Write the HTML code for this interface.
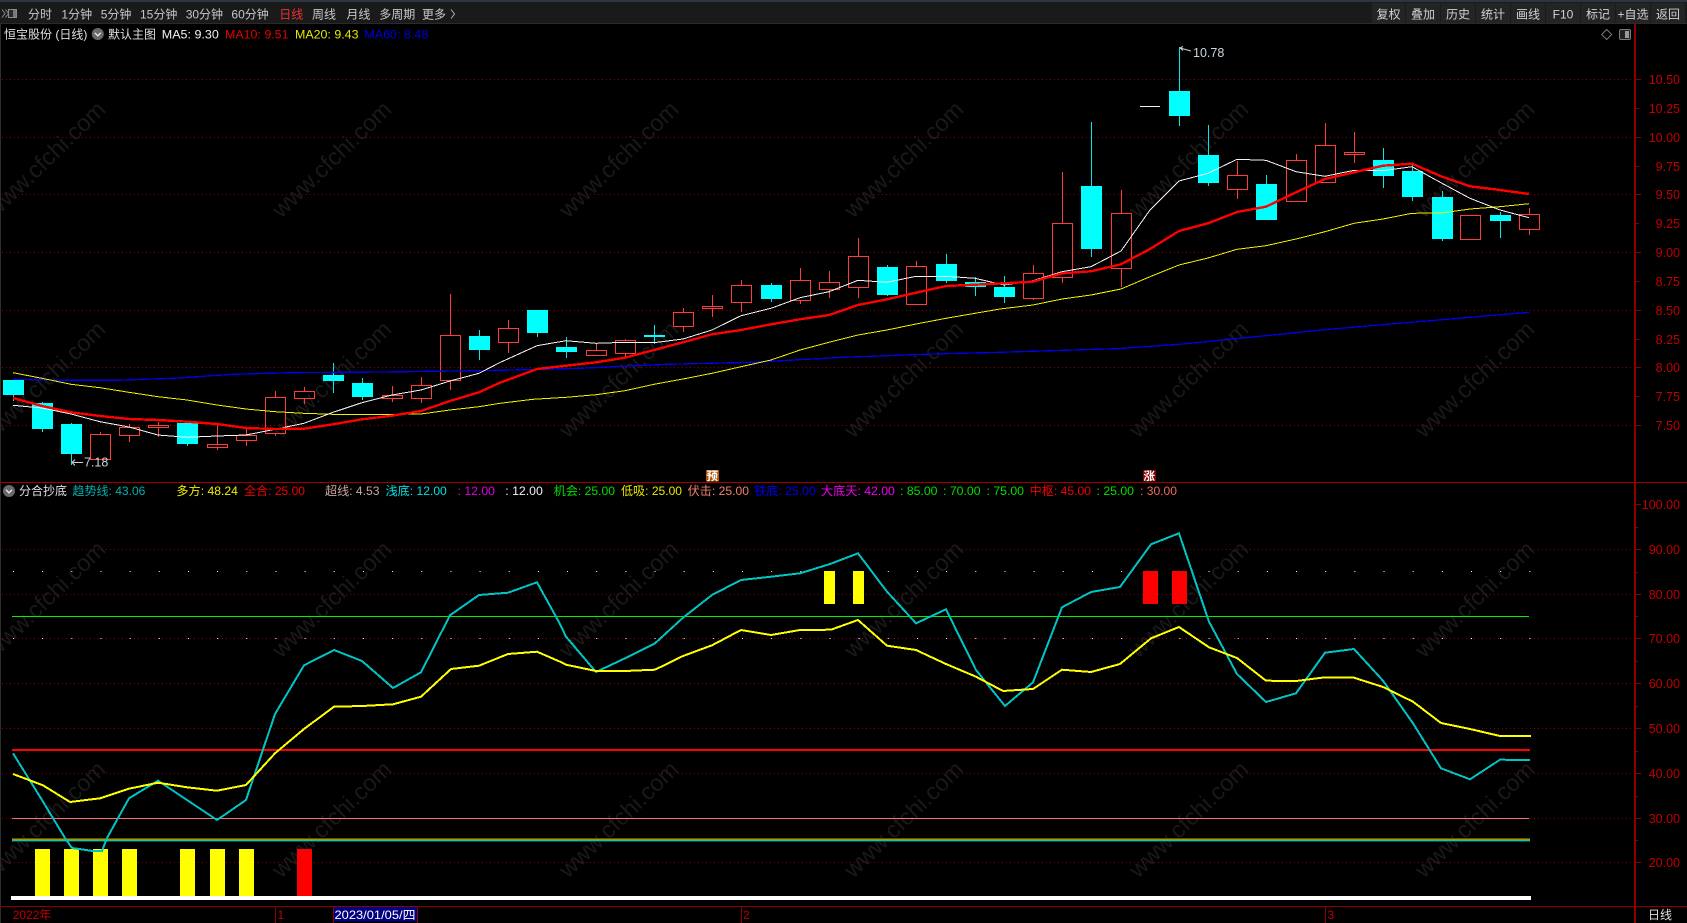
<!DOCTYPE html>
<html lang="zh-CN">
<head>
<meta charset="utf-8">
<title>恒宝股份</title>
<style>
html,body{margin:0;padding:0;background:#000;width:1687px;height:923px;overflow:hidden}
svg{display:block}
text{font-family:"Liberation Sans","Noto Sans CJK SC",sans-serif;font-size:12px}
.wm text{font-size:23.500px;fill:#191919;text-anchor:end}
.tb text{fill:#c8c8c8;font-size:12px}
.tbr text{fill:#d0d0d0;font-size:12px;text-anchor:middle}
.ax text{fill:#c00000;font-size:12.500px;text-anchor:end}
.grid line{stroke:#8a0000;stroke-width:1;stroke-dasharray:1 3}
</style>
</head>
<body>
<svg xmlns="http://www.w3.org/2000/svg" width="1687" height="923" viewBox="0 0 1687 923">
<rect width="1687" height="923" fill="#000"/>

<!-- watermark -->
<g class="wm">
<text transform="translate(107,111) rotate(-44)">www.cfchi.com</text>
<text transform="translate(393,111) rotate(-44)">www.cfchi.com</text>
<text transform="translate(680,111) rotate(-44)">www.cfchi.com</text>
<text transform="translate(965,111) rotate(-44)">www.cfchi.com</text>
<text transform="translate(1250,111) rotate(-44)">www.cfchi.com</text>
<text transform="translate(1536,111) rotate(-44)">www.cfchi.com</text>
<text transform="translate(107,331) rotate(-44)">www.cfchi.com</text>
<text transform="translate(393,331) rotate(-44)">www.cfchi.com</text>
<text transform="translate(680,331) rotate(-44)">www.cfchi.com</text>
<text transform="translate(965,331) rotate(-44)">www.cfchi.com</text>
<text transform="translate(1250,331) rotate(-44)">www.cfchi.com</text>
<text transform="translate(1536,331) rotate(-44)">www.cfchi.com</text>
<text transform="translate(107,551) rotate(-44)">www.cfchi.com</text>
<text transform="translate(393,551) rotate(-44)">www.cfchi.com</text>
<text transform="translate(680,551) rotate(-44)">www.cfchi.com</text>
<text transform="translate(965,551) rotate(-44)">www.cfchi.com</text>
<text transform="translate(1250,551) rotate(-44)">www.cfchi.com</text>
<text transform="translate(1536,551) rotate(-44)">www.cfchi.com</text>
<text transform="translate(107,771) rotate(-44)">www.cfchi.com</text>
<text transform="translate(393,771) rotate(-44)">www.cfchi.com</text>
<text transform="translate(680,771) rotate(-44)">www.cfchi.com</text>
<text transform="translate(965,771) rotate(-44)">www.cfchi.com</text>
<text transform="translate(1250,771) rotate(-44)">www.cfchi.com</text>
<text transform="translate(1536,771) rotate(-44)">www.cfchi.com</text>
</g>

<!-- top bar -->
<rect x="0" y="0" width="1687" height="2" fill="#2c3540"/>
<rect x="0" y="2" width="1687" height="21" fill="#1a1a1a"/>
<rect x="0" y="23" width="1687" height="1" fill="#2a2a2a"/>
<path d="M2 9.500l3 4-3 4M5.500 9.500l3 4-3 4" fill="none" stroke="#8a8a8a" stroke-width="1"/>
<rect x="8.500" y="9.500" width="8" height="8" fill="#2a2a2a" stroke="#8a8a8a" stroke-width="1"/>
<rect x="13" y="10" width="3" height="7" fill="#777"/>
<g class="tb">
<text x="28" y="18.300">分时</text>
<text x="61.400" y="18.300">1分钟</text>
<text x="100.700" y="18.300">5分钟</text>
<text x="140" y="18.300">15分钟</text>
<text x="185.700" y="18.300">30分钟</text>
<text x="231.400" y="18.300">60分钟</text>
<text x="279.300" y="18.300" style="fill:#f03030">日线</text>
<text x="312" y="18.300">周线</text>
<text x="346.400" y="18.300">月线</text>
<text x="379.300" y="18.300">多周期</text>
<text x="422" y="18.300">更多</text>
</g>
<path d="M451 9.500l3.500 4.500-3.500 4.500" fill="none" stroke="#b0b0b0" stroke-width="1"/>

<g fill="#242424">
<rect x="1372" y="3" width="33" height="20"/>
<rect x="1406" y="3" width="34" height="20"/>
<rect x="1441" y="3" width="34" height="20"/>
<rect x="1476" y="3" width="34" height="20"/>
<rect x="1511" y="3" width="34" height="20"/>
<rect x="1546" y="3" width="34" height="20"/>
<rect x="1581" y="3" width="34" height="20"/>
<rect x="1616" y="3" width="34" height="20"/>
<rect x="1651" y="3" width="34" height="20"/>
</g>
<g class="tbr">
<text x="1388.500" y="18.300">复权</text>
<text x="1423" y="18.300">叠加</text>
<text x="1458" y="18.300">历史</text>
<text x="1493" y="18.300">统计</text>
<text x="1528" y="18.300">画线</text>
<text x="1563" y="18.300">F10</text>
<text x="1598" y="18.300">标记</text>
<text x="1633" y="18.300">+自选</text>
<text x="1668" y="18.300">返回</text>
</g>

<!-- left edge -->
<rect x="0" y="24" width="1" height="899" fill="#2e2e2e"/>

<!-- main header -->
<text x="4" y="38.300" fill="#e0e0e0">恒宝股份 (日线)</text>
<circle cx="97.800" cy="34" r="6" fill="#6a6a6a"/>
<path d="M94.800 32.800l3 3 3-3" fill="none" stroke="#eee" stroke-width="1.300"/>
<text x="108" y="38.300" fill="#e0e0e0">默认主图</text>
<text x="161.800" y="38.300" fill="#f0f0f0" textLength="57" lengthAdjust="spacingAndGlyphs">MA5: 9.30</text>
<text x="225" y="38.300" fill="#e00000" textLength="63.500" lengthAdjust="spacingAndGlyphs">MA10: 9.51</text>
<text x="295" y="38.300" fill="#e6e600" textLength="63.500" lengthAdjust="spacingAndGlyphs">MA20: 9.43</text>
<text x="364.300" y="38.300" fill="#0000e0" textLength="64" lengthAdjust="spacingAndGlyphs">MA60: 8.48</text>
<path d="M1606.700 29.500l5 5-5 5-5-5z" fill="none" stroke="#7a7a7a" stroke-width="1"/>
<rect x="1619.500" y="29.500" width="11" height="10" rx="1.500" fill="#222" stroke="#7a7a7a" stroke-width="1"/>
<rect x="1625" y="31" width="4" height="7" fill="#9a9a9a"/>

<!-- grid main -->
<g class="grid">
<line x1="2" x2="1634" y1="79.500" y2="79.500"/>
<line x1="2" x2="1634" y1="137.500" y2="137.500"/>
<line x1="2" x2="1634" y1="194.500" y2="194.500"/>
<line x1="2" x2="1634" y1="252.500" y2="252.500"/>
<line x1="2" x2="1634" y1="310.500" y2="310.500"/>
<line x1="2" x2="1634" y1="367.500" y2="367.500"/>
<line x1="2" x2="1634" y1="425.500" y2="425.500"/>
<line x1="2" x2="1634" y1="549.500" y2="549.500"/>
<line x1="2" x2="1634" y1="594.500" y2="594.500"/>
<line x1="2" x2="1634" y1="638.500" y2="638.500"/>
<line x1="2" x2="1634" y1="683.500" y2="683.500"/>
<line x1="2" x2="1634" y1="728.500" y2="728.500"/>
<line x1="2" x2="1634" y1="773.500" y2="773.500"/>
<line x1="2" x2="1634" y1="818.500" y2="818.500"/>
<line x1="2" x2="1634" y1="862.500" y2="862.500"/>
</g>

<!-- candles -->
<g shape-rendering="crispEdges" fill="none" stroke="#ff3c3c" stroke-width="1">
<path d="M90.500 434.500h20v25h-20zM100.500 432v2
M119.500 427.500h20v8h-20zM129.500 424v3M129.500 436v6
M148.500 425.500h20v2h-20zM158.500 422v3M158.500 428v9
M207.500 444.500h20v3h-20zM217.500 425v19M217.500 448v2
M236.500 435.500h20v5h-20zM246.500 429v6M246.500 441v5
M265.500 397.500h20v36h-20zM275.500 391v6M275.500 434v2
M294.500 391.500h20v7h-20zM304.500 387v4M304.500 399v5
M382.500 395.500h20v3h-20zM392.500 386v9M392.500 399v3
M411.500 385.500h20v13h-20zM421.500 377v8M421.500 399v4
M440.500 335.500h20v45h-20zM450.500 294v41M450.500 381v9
M498.500 328.500h20v14h-20zM508.500 320v8M508.500 343v10
M586.500 350.500h20v5h-20zM596.500 343v7
M615.500 340.500h20v13h-20zM625.500 339v1M625.500 354v3
M673.500 312.500h20v14h-20zM683.500 308v4M683.500 327v5
M702.500 306.500h20v2h-20zM712.500 295v11M712.500 309v8
M731.500 285.500h20v17h-20zM741.500 280v5M741.500 303v9
M790.500 280.500h20v20h-20zM800.500 268v12M800.500 301v3
M819.500 282.500h20v7h-20zM829.500 271v11M829.500 290v8
M848.500 256.500h20v31h-20zM858.500 238v18M858.500 288v10
M906.500 266.500h20v38h-20zM916.500 261v5
M1023.500 273.500h20v25h-20zM1033.500 265v8M1033.500 299v1
M1052.500 223.500h20v54h-20zM1062.500 172v51M1062.500 278v5
M1111.500 213.500h20v55h-20zM1121.500 190v23M1121.500 269v18
M1227.500 175.500h20v14h-20zM1237.500 161v14M1237.500 190v9
M1286.500 160.500h20v41h-20zM1296.500 154v6
M1315.500 145.500h20v37h-20zM1325.500 123v22
M1344.500 152.500h20v2h-20zM1354.500 132v20M1354.500 155v8
M1460.500 215.500h20v24h-20z
M1519.500 214.500h20v15h-20zM1529.500 208v6M1529.500 230v5"/>
</g>
<g shape-rendering="crispEdges" fill="none" stroke="#00e8e8" stroke-width="1">
<path d="M13.500 395v6M42.500 402v27M42.500 429v3M71.500 423v1M71.500 454v11M187.500 444v2
M333.500 363v12M333.500 381v12M362.500 378v5M362.500 397v3M479.500 330v6M479.500 350v10M537.500 333v4
M566.500 337v10M566.500 352v6M654.500 325v10M654.500 337v7M771.500 283v2M771.500 299v3
M887.500 265v2M887.500 295v1M946.500 254v10M946.500 281v2M975.500 277v5M975.500 287v9
M1004.500 276v11M1004.500 297v6M1091.500 122v64M1091.500 249v8M1179.500 47v44M1179.500 116v10
M1208.500 125v30M1208.500 183v3M1266.500 175v9M1383.500 148v12M1383.500 176v12M1412.500 163v8M1412.500 197v4
M1442.500 191v6M1442.500 239v2M1500.500 212v3M1500.500 221v17"/>
</g>
<g shape-rendering="crispEdges" fill="#00ffff">
<rect x="3" y="380" width="21" height="15"/>
<rect x="32" y="403" width="21" height="26"/>
<rect x="61" y="424" width="21" height="30"/>
<rect x="177" y="423" width="21" height="21"/>
<rect x="323" y="375" width="21" height="6"/>
<rect x="352" y="383" width="21" height="14"/>
<rect x="469" y="336" width="21" height="14"/>
<rect x="527" y="310" width="21" height="23"/>
<rect x="556" y="347" width="21" height="5"/>
<rect x="644" y="335" width="21" height="2"/>
<rect x="761" y="285" width="21" height="14"/>
<rect x="877" y="267" width="21" height="28"/>
<rect x="936" y="264" width="21" height="17"/>
<rect x="965" y="282" width="21" height="5"/>
<rect x="994" y="287" width="21" height="10"/>
<rect x="1081" y="186" width="21" height="63"/>
<rect x="1169" y="91" width="21" height="25"/>
<rect x="1198" y="155" width="21" height="28"/>
<rect x="1256" y="184" width="21" height="36"/>
<rect x="1373" y="160" width="21" height="16"/>
<rect x="1402" y="171" width="21" height="26"/>
<rect x="1432" y="197" width="21" height="42"/>
<rect x="1490" y="215" width="21" height="6"/>
</g>
<rect x="1140" y="106" width="20" height="1" fill="#f0f0f0" shape-rendering="crispEdges"/>

<!-- MA lines -->
<g fill="none" shape-rendering="crispEdges">
<polyline stroke="#0000f0" stroke-width="1.300" points="13,379.300 67,380.300 115,380.300 173,378.300 233,374.300 290,372.700 383,372 500,370.300 580,368.300 667,364.300 753,362.300 843,357.300 933,354 1000,352.300 1119,348.600 1183,344 1329,329.300 1529,312.300"/>
<polyline stroke="#f0f000" stroke-width="1" points="13,372.700 42,378.300 71,384.300 100,387.700 129,392.300 158,396.700 187,400 217,405 246,409 275,411.700 304,413.300 333,414.300 362,414.300 392,414.300 421,414 450,410 479,406.700 500,403.300 533,399.300 566,397.300 596,394.700 625,390.700 654,384.300 683,379 712,373.300 741,366.700 771,360 800,350 829,342.300 858,335 887,330 916,324 946,318.300 975,313.300 1000,309 1033,305 1062,299 1091,295 1121,289 1150,276.700 1179,265 1208,258 1237,249.300 1266,245.700 1296,239 1325,231.700 1354,223.300 1383,219 1412,213.300 1442,213 1470,209 1500,206.700 1529,203.700"/>
<polyline stroke="#f4f4f4" stroke-width="1" points="13,405.300 42,408 71,414 100,421.700 129,427 158,435 187,437.300 217,436 246,435 275,429.300 304,423.300 333,412.300 362,402.700 392,395 421,390 450,381 479,373.300 500,362.500 537,345.700 566,340.700 596,343.300 625,342.300 654,342.700 683,339 712,330 741,315.700 771,308.300 800,297.700 829,291.700 858,280.300 887,282.300 916,276.300 946,276.300 975,278.300 1004,285 1033,280.700 1062,271.700 1091,266.700 1121,251 1150,210 1179,181 1208,173.300 1237,159.300 1266,160.300 1296,171.700 1325,176.300 1354,170.300 1383,170.700 1412,166.700 1442,183.300 1470,198.300 1500,210 1529,217.700"/>
<polyline stroke="#ff0000" stroke-width="2.400" points="13,398 42,406 71,412.300 100,416 129,419 158,420 187,421.700 217,424 246,428 275,429 304,428.700 333,424.300 362,419.300 392,415.700 421,411 450,401 479,392.300 500,382.700 537,369 566,365.700 596,362.300 625,357.700 654,350 683,342.300 712,334.300 741,330 771,324.300 800,319.300 829,315 858,305 887,299.300 916,292.700 946,286 975,284.700 1004,283.300 1033,281.700 1062,273.300 1091,271.300 1121,264.300 1150,249 1179,231 1208,223.300 1237,212 1266,206.700 1296,192.300 1325,179 1354,172.300 1383,165.700 1412,163.700 1442,176.700 1470,186.300 1500,190 1529,194"/>
</g>

<!-- high/low annotation -->
<path d="M1180 48l11 3M1180 48l3-1.500M1180 48l3 2.500" fill="none" stroke="#d0d0d0" stroke-width="1"/>
<text x="1193" y="56.800" fill="#c8d6e0" style="font-size:12.500px">10.78</text>
<path d="M72 462.500h11M72 462.500l3-3M72 462.500l3 3" fill="none" stroke="#d0d0d0" stroke-width="1"/>
<text x="84" y="466.300" fill="#c8d6e0" style="font-size:12.500px">7.18</text>

<!-- signal tags -->
<rect x="706" y="470" width="13" height="11.500" fill="#b05000"/>
<text x="706.500" y="480" fill="#fff" style="font-size:11.500px;font-weight:bold">预</text>
<rect x="1143" y="470" width="13" height="11.500" fill="#800000"/>
<text x="1143.500" y="480" fill="#fff" style="font-size:11.500px;font-weight:bold">涨</text>

<!-- pane divider -->
<rect x="0" y="482" width="1687" height="1" fill="#a00000"/>

<!-- lower header -->
<circle cx="9" cy="491" r="6" fill="#6a6a6a"/>
<path d="M6 489.800l3 3 3-3" fill="none" stroke="#eee" stroke-width="1.300"/>
<text x="19" y="495.200" fill="#e0e0e0">分合抄底</text>
<text x="72.400" y="495.200" fill="#00b0b0" textLength="73" lengthAdjust="spacingAndGlyphs">趋势线: 43.06</text>
<text x="176.400" y="495.200" fill="#f0f000" textLength="61.500" lengthAdjust="spacingAndGlyphs">多方: 48.24</text>
<text x="244" y="495.200" fill="#f00000" textLength="61" lengthAdjust="spacingAndGlyphs">全合: 25.00</text>
<text x="325" y="495.200" fill="#c8a8a0" textLength="54.500" lengthAdjust="spacingAndGlyphs">超线: 4.53</text>
<text x="385.500" y="495.200" fill="#00e0e0" textLength="61.300" lengthAdjust="spacingAndGlyphs">浅底: 12.00</text>
<text x="457.500" y="495.200" fill="#e000e0" textLength="37.500" lengthAdjust="spacingAndGlyphs">: 12.00</text>
<text x="505.300" y="495.200" fill="#f0f0f0" textLength="37.500" lengthAdjust="spacingAndGlyphs">: 12.00</text>
<text x="553.600" y="495.200" fill="#00e000" textLength="61.400" lengthAdjust="spacingAndGlyphs">机会: 25.00</text>
<text x="621" y="495.200" fill="#e8e800" textLength="61" lengthAdjust="spacingAndGlyphs">低吸: 25.00</text>
<text x="687.600" y="495.200" fill="#f08070" textLength="61.400" lengthAdjust="spacingAndGlyphs">伏击: 25.00</text>
<text x="754" y="495.200" fill="#0000f0" textLength="61.700" lengthAdjust="spacingAndGlyphs">铁底: 25.00</text>
<text x="820.900" y="495.200" fill="#f000f0" textLength="73.900" lengthAdjust="spacingAndGlyphs">大底天: 42.00</text>
<text x="900" y="495.200" fill="#00e000" textLength="37.500" lengthAdjust="spacingAndGlyphs">: 85.00</text>
<text x="943" y="495.200" fill="#00e000" textLength="37.600" lengthAdjust="spacingAndGlyphs">: 70.00</text>
<text x="986.500" y="495.200" fill="#00e000" textLength="37.500" lengthAdjust="spacingAndGlyphs">: 75.00</text>
<text x="1029.600" y="495.200" fill="#f00000" textLength="61.400" lengthAdjust="spacingAndGlyphs">中枢: 45.00</text>
<text x="1096.500" y="495.200" fill="#00e000" textLength="37.500" lengthAdjust="spacingAndGlyphs">: 25.00</text>
<text x="1140" y="495.200" fill="#f06858" textLength="37" lengthAdjust="spacingAndGlyphs">: 30.00</text>

<!-- white dots -->
<g fill="none" stroke="#fff" stroke-width="1" stroke-dasharray="1 28.160">
<line x1="13" x2="1531" y1="571.500" y2="571.500"/>
<line x1="13" x2="1531" y1="638.500" y2="638.500"/>
</g>

<!-- horizontal levels -->
<g shape-rendering="crispEdges">
<rect x="12" y="616" width="1517" height="1" fill="#00f000"/>
<rect x="12" y="749" width="1518" height="2" fill="#ff0000"/>
<rect x="12" y="818" width="1517" height="1" fill="#ff7070"/>
<rect x="12" y="838" width="1518" height="1" fill="#ff0000"/>
<rect x="12" y="839" width="1518" height="2" fill="#00ee00"/>
<rect x="12" y="841" width="1518" height="1" fill="#2020e0"/>
</g>

<!-- bars -->
<g fill="#ffff00" shape-rendering="crispEdges">
<rect x="824" y="571" width="11" height="33"/>
<rect x="853" y="571" width="11" height="33"/>
<rect x="35" y="849" width="15" height="47"/>
<rect x="64" y="849" width="15" height="47"/>
<rect x="93" y="849" width="15" height="47"/>
<rect x="122" y="849" width="15" height="47"/>
<rect x="180" y="849" width="15" height="47"/>
<rect x="210" y="849" width="15" height="47"/>
<rect x="239" y="849" width="15" height="47"/>
</g>
<g fill="#ff0000" shape-rendering="crispEdges">
<rect x="1143" y="571" width="15" height="33"/>
<rect x="1172" y="571" width="15" height="33"/>
<rect x="297" y="849" width="15" height="47"/>
</g>
<rect x="11" y="896" width="1520" height="4" fill="#fff" shape-rendering="crispEdges"/>

<!-- lower indicator lines -->
<g fill="none" shape-rendering="crispEdges" stroke-width="2">
<polyline stroke="#00c4c4" points="13,753.300 42,800 65,838 72,848 93,851 102,851 107,838 129,798.300 158,780.700 187,800 217,820 246,800 275,714 304,665.300 334,650 362,661 393,688 421,672.300 450,615.300 479,595 508,592.700 537,582.300 560,624 566,636.700 596,672 625,658.300 655,643.300 683,617.700 712,595 741,580 771,576.700 800,573.300 830,564 858,553.300 887,591.700 916,623.300 946,609.300 976,670 1005,706 1033,682.300 1062,607.300 1091,592 1120,587 1151,544.300 1179,533.300 1209,621.700 1237,674 1266,702 1296,693.300 1325,652.700 1354,649 1383,680.700 1413,723.300 1441,768.300 1470,779.300 1500,759.700 1530,760"/>
<polyline stroke="#ffff00" points="13,774 43,785.300 70,802 100,798.300 129,788.700 158,782.700 187,787.300 217,790.700 246,785 275,753.300 304,729 334,706.700 362,706 393,704.300 421,696.700 451,669 479,665.700 508,654 537,651.700 560,661.700 566,664.700 596,671 625,671 655,669.700 683,656 712,645.300 741,630 771,635 800,630 831,629.700 858,620 887,645.700 916,650 946,664 976,676.700 1003,691 1033,689 1062,669.700 1091,672 1120,664 1151,638.300 1179,627 1209,647.300 1237,658 1266,680.700 1296,681 1325,677.300 1354,677.700 1383,687 1413,701.700 1441,723 1470,729 1500,736 1531,736"/>
</g>

<!-- axes -->
<rect x="1634" y="24" width="2" height="899" fill="#8c0000"/>
<rect x="0" y="906" width="1687" height="1" fill="#8c0000"/>
<path d="M1636 79.500h5M1636 108.500h3M1636 137.500h5M1636 166.500h3M1636 194.500h5M1636 223.500h3M1636 252.500h5M1636 281.500h3M1636 310.500h5M1636 339.500h3M1636 367.500h5M1636 396.500h3M1636 425.500h5
M1636 504.500h5M1636 527.500h2M1636 549.500h5M1636 572.500h2M1636 594.500h5M1636 616.500h2M1636 638.500h5M1636 661.500h2M1636 683.500h5M1636 706.500h2M1636 728.500h5M1636 751.500h2M1636 773.500h5M1636 796.500h2M1636 818.500h5M1636 840.500h2M1636 862.500h5" fill="none" stroke="#8c0000" stroke-width="1" shape-rendering="crispEdges"/>
<g class="ax">
<text x="1680" y="83.800">10.50</text>
<text x="1680" y="112.800">10.25</text>
<text x="1680" y="141.800">10.00</text>
<text x="1680" y="170.800">9.75</text>
<text x="1680" y="199.200">9.50</text>
<text x="1680" y="228">9.25</text>
<text x="1680" y="256.800">9.00</text>
<text x="1680" y="285.800">8.75</text>
<text x="1680" y="314.800">8.50</text>
<text x="1680" y="343.800">8.25</text>
<text x="1680" y="372">8.00</text>
<text x="1680" y="401">7.75</text>
<text x="1680" y="429.800">7.50</text>
<text x="1680" y="508.800">100.00</text>
<text x="1680" y="553.800">90.00</text>
<text x="1680" y="598.800">80.00</text>
<text x="1680" y="642.800">70.00</text>
<text x="1680" y="687.800">60.00</text>
<text x="1680" y="732.800">50.00</text>
<text x="1680" y="777.800">40.00</text>
<text x="1680" y="822.800">30.00</text>
<text x="1680" y="866.800">20.00</text>
</g>

<!-- time axis -->
<path d="M275.500 907v16M741.500 907v16M1325.500 907v16" fill="none" stroke="#8c0000" stroke-width="1" shape-rendering="crispEdges"/>
<text x="12.700" y="919.200" fill="#c00000">2022年</text>
<text x="277.500" y="919.200" fill="#c00000">1</text>
<text x="743" y="919.200" fill="#c00000">2</text>
<text x="1327.500" y="919.200" fill="#c00000">3</text>
<rect x="333" y="907" width="84" height="14.500" fill="#000080"/>
<path d="M333.500 907v16M417.500 907v16" stroke="#8c0000" stroke-width="1" shape-rendering="crispEdges"/>
<text x="334.500" y="919" fill="#fff" textLength="81" lengthAdjust="spacingAndGlyphs">2023/01/05/四</text>
<text x="1648" y="919.200" fill="#e0e0e0">日线</text>
</svg>
</body>
</html>
